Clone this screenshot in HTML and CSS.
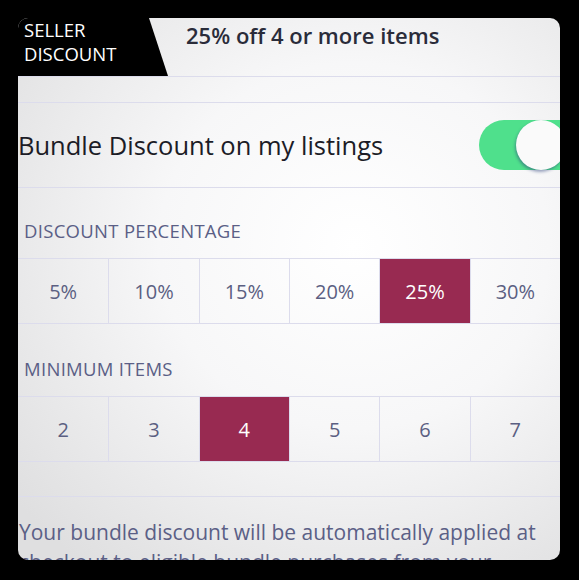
FILE: index.html
```html
<!DOCTYPE html>
<html lang="en">
<head>
  <meta charset="UTF-8" />
  <title>Seller Discount</title>
  <link rel="stylesheet" href="styles.css">
</head>
<body>
  <div class="card">
    <div class="header">
      <div class="tab">SELLER<br>DISCOUNT</div>
      <div class="summary">25% off 4 or more items</div>
    </div>
    <div class="spacer"></div>

    <div class="toggle-row">
      <span>Bundle Discount on my listings</span>
      <span class="switch"><span class="knob"></span></span>
    </div>

    <p class="label">DISCOUNT PERCENTAGE</p>
    <div class="choices">
      <div class="choice">5%</div>
      <div class="choice">10%</div>
      <div class="choice">15%</div>
      <div class="choice">20%</div>
      <div class="choice selected">25%</div>
      <div class="choice">30%</div>
    </div>

    <p class="label second">MINIMUM ITEMS</p>
    <div class="choices">
      <div class="choice">2</div>
      <div class="choice">3</div>
      <div class="choice selected">4</div>
      <div class="choice">5</div>
      <div class="choice">6</div>
      <div class="choice">7</div>
    </div>
    <div class="gap"></div>

    <p class="note">Your bundle discount will be automatically applied at checkout to eligible bundle purchases from your closet.</p>
  </div>
</body>
</html>
```

FILE: styles.css
```css
body { margin: 0; background: #000; font-family: "Open Sans", "Noto Sans", sans-serif; }
.card {
  margin: 18px;
  width: 542px;
  height: 542px;
  border-radius: 10px;
  overflow: hidden;
  background: radial-gradient(ellipse 80% 75% at 62% 42%, #ffffff 0%, #f7f7f8 45%, #dfdfe0 100%);
}
.header { display: flex; height: 58px; border-bottom: 1px solid #dcdcec; }
.tab {
  width: 150px;
  background: #000;
  color: #fff;
  font-size: 18.5px;
  line-height: 24px;
  padding: 0 0 0 6px;
  box-sizing: border-box;
  clip-path: polygon(0 0, 131px 0, 150px 100%, 0 100%);
}
.summary { padding: 2px 0 0 18px; font-size: 22px; font-weight: 600; color: #2a2c3a; }
.spacer { height: 25px; border-bottom: 1px solid #dcdcec; }
.toggle-row {
  display: flex; justify-content: space-between; align-items: center;
  height: 84px; border-bottom: 1px solid #dcdcec;
  font-size: 25.5px; color: #1c1c26;
}
.switch {
  position: relative; width: 82px; height: 50px; margin-right: -1px;
  border-radius: 25px 0 0 25px; background: #4fe08c;
}
.knob {
  position: absolute; left: 37px; top: 0; width: 50px; height: 50px;
  border-radius: 50%; background: #fafafa;
  box-shadow: -1px 2px 3px rgba(40, 60, 120, 0.45);
}
.label {
  margin: 0; height: 70px; box-sizing: border-box;
  padding: 30px 0 0 6px; font-size: 18.5px; letter-spacing: 0.3px; color: #5b5f86;
}
.label.second { height: 72px; padding-top: 32px; }
.choices {
  display: grid; grid-template-columns: repeat(6, 1fr);
  border-top: 1px solid #dcdcec; border-bottom: 1px solid #dcdcec;
}
.choice {
  height: 64px; display: flex; align-items: center; justify-content: center;
  font-size: 20px; color: #5b5f82; border-left: 1px solid #dcdcec;
}
.choice:first-child { border-left: none; }
.choice.selected { background: #982a51; color: #fff; }
.gap { height: 34px; border-bottom: 1px solid #dcdcec; }
.note {
  margin: 0; padding: 20px 0 0 1px; max-width: 528px;
  font-size: 21px; line-height: 30px; color: #5b5f86;
}
```
